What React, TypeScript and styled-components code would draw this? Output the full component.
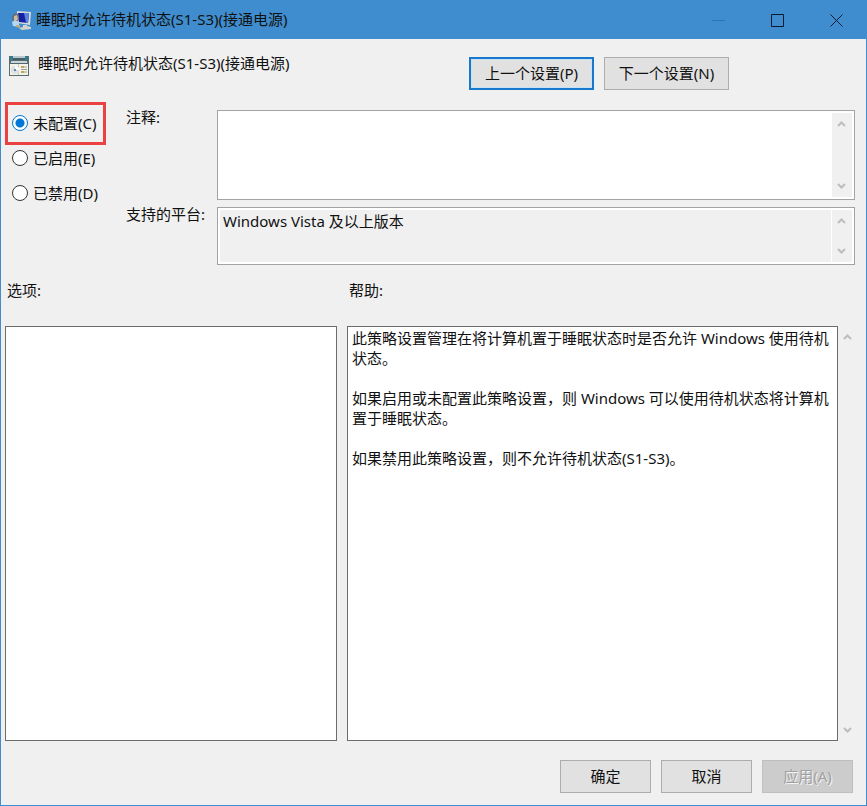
import React, { useState } from "react";
import styled, { createGlobalStyle, css } from "styled-components";

const GlobalStyle = createGlobalStyle`
  * { box-sizing: border-box; }
  body {
    margin: 0;
    background: #f0f0f0;
    color: #111;
    font: 15px/20px "Noto Sans", "Noto Sans CJK SC", sans-serif;
  }
  button, input, textarea { font: inherit; color: inherit; margin: 0; }
`;

const Window = styled.main`
  display: flex;
  flex-direction: column;
  min-height: 100vh;
  background: #f0f0f0;
  border: 1px solid #3f8dce;
`;

const TitleBar = styled.header`
  display: flex;
  align-items: center;
  height: 38px;
  padding-left: 10px;
  background: #3f8dce;
`;

const WindowTitle = styled.h1`
  flex: 1;
  margin: 0;
  padding: 0 0 2px 5px;
  font-size: 15px;
  font-weight: 400;
  white-space: nowrap;
`;

const CaptionGroup = styled.div`
  display: flex;
`;

const CaptionButton = styled.button`
  display: grid;
  place-items: center;
  width: 59px;
  height: 38px;
  padding: 0;
  border: 0;
  background: transparent;
  color: #0b1a30;
  &:disabled { color: #2b74b4; }
`;

const PolicyHeader = styled.section`
  display: flex;
  align-items: flex-start;
  gap: 9px;
  padding: 17px 137px 0 8px;
`;

const PolicyTitle = styled.h2`
  flex: 1;
  margin: 0;
  font-size: 15px;
  font-weight: 400;
  line-height: 14px;
  white-space: nowrap;
`;

const ButtonGroup = styled.div`
  display: flex;
  gap: 10px;
  padding-top: 1px;
`;

const Button = styled.button<{ $width: number; $focused?: boolean }>`
  width: ${(p) => p.$width}px;
  height: 33px;
  padding: 0 0 2px;
  border: 1px solid #adadad;
  background: #e1e1e1;
  white-space: nowrap;
  ${(p) =>
    p.$focused &&
    css`
      border: 2px solid #1878cc;
      box-shadow: inset 0 0 0 1px #c9e1f4;
    `}
  &:disabled {
    background: #cccccc;
    border-color: #bfbfbf;
    color: #a0a0a0;
    text-shadow: 1px 1px 0 #f4f4f4;
  }
`;

const Settings = styled.section`
  display: grid;
  grid-template-columns: 101px minmax(0, 1fr);
  column-gap: 20px;
  padding: 12px 11px 0 4px;
`;

const StateGroup = styled.fieldset`
  display: flex;
  flex-direction: column;
  min-width: 0;
  margin: 0;
  padding: 0;
  border: 0;
`;

const StateOption = styled.label<{ $marked?: boolean }>`
  display: flex;
  align-items: center;
  gap: 5px;
  height: 35px;
  padding: 0 0 1px 7px;
  white-space: nowrap;
  ${(p) =>
    p.$marked &&
    css`
      height: 43px;
      margin-bottom: -4px;
      padding-left: 4px;
      border: 3px solid #ea4243;
    `}
`;

const Radio = styled.input`
  appearance: none;
  flex: none;
  width: 16px;
  height: 16px;
  border: 1px solid #333;
  border-radius: 50%;
  background: #fff;
  &:checked {
    border-color: #0078d7;
    background: radial-gradient(circle, #0078d7 0 4px, #fff 5px);
  }
`;

const StateText = styled.span`
  padding-bottom: 1px;
`;

const Fields = styled.div`
  display: grid;
  grid-template-columns: 83px minmax(0, 1fr);
  column-gap: 8px;
  row-gap: 7px;
  padding-top: 8px;
`;

const FieldLabel = styled.label`
  line-height: 14px;
  white-space: nowrap;
`;

const Field = styled.div<{ $height: number }>`
  display: flex;
  height: ${(p) => p.$height}px;
  padding: 2px;
  border: 1px solid #a3a3a3;
  background: #fff;
`;

const TextArea = styled.textarea`
  flex: 1;
  min-width: 0;
  padding: 1px 4px;
  border: 0;
  outline: 0;
  resize: none;
  overflow: hidden;
  background: #fff;
`;

const PlatformText = styled(TextArea)`
  margin-right: 1px;
  padding-left: 3px;
  background: #f0f0f0;
`;

const HelpText = styled(TextArea)`
  border: 1px solid #6b6d6b;
`;

const ScrollTrack = styled.div`
  display: flex;
  flex-direction: column;
  justify-content: space-between;
  flex: none;
  width: 20px;
  background: #f0f0f0;
`;

const ScrollButton = styled.button`
  display: grid;
  place-items: center;
  width: 20px;
  height: 22px;
  padding: 0;
  border: 0;
  background: transparent;
  color: #bdbdbd;
`;

const Details = styled.section`
  display: grid;
  flex: 1;
  grid-template-columns: minmax(0, 332fr) minmax(0, 511fr);
  grid-template-rows: auto 1fr;
  column-gap: 10px;
  row-gap: 26px;
  padding: 15px 8px 0 4px;
`;

const DetailLabel = styled.label`
  padding-left: 2px;
`;

const DetailHeading = styled.h2`
  margin: 0;
  padding-left: 2px;
  font-size: 15px;
  font-weight: 400;
`;

const OptionsPanel = styled.div`
  border: 1px solid #6b6d6b;
  background: #fff;
`;

const HelpPanel = styled.div`
  display: flex;
`;

const Footer = styled.footer`
  display: flex;
  justify-content: flex-end;
  gap: 10px;
  padding: 19px 13px 12px;
`;

const Chevron = ({ up }: { up?: boolean }) => (
  <svg width="10" height="8" viewBox="0 0 10 8" fill="none" stroke="currentColor" strokeWidth="2">
    <path d={up ? "M1 6 4.5 2.5 8 6" : "M1 2 4.5 5.5 8 2"} />
  </svg>
);

const Scroller = ({ name }: { name: string }) => (
  <ScrollTrack>
    <ScrollButton type="button" aria-label={`${name}向上滚动`}><Chevron up /></ScrollButton>
    <ScrollButton type="button" aria-label={`${name}向下滚动`}><Chevron /></ScrollButton>
  </ScrollTrack>
);

const ComputerIcon = () => (
  <svg width="20" height="19" viewBox="0 0 20 19" aria-hidden="true">
    <path d="M6 0 20 1 19 14 6 12Z" fill="#d5dadd" />
    <path d="M7 2 18 2 17 12 8 11Z" fill="#1420a0" />
    <path d="M13 2h5l-1 10-2-.5Z" fill="#5b83e2" />
    <path d="M12 14h4v1l4 1v2l-9 1-3-2 4-1Z" fill="#d2d4ca" />
    <path d="M1 5 4 2 7 3 8 8 6 12 2 11Z" fill="#5e6e7c" />
    <path d="M3 5 6 4 7 8 5 10 3 9Z" fill="#d1ba9d" />
    <path d="M1 11 4 9 8 11 8 16 2 15Z" fill="#b9d6ef" />
    <path d="M5 14 9 14 9 17 5 16Z" fill="#b9ad84" />
  </svg>
);

const PolicyIcon = () => (
  <svg width="20" height="20" viewBox="0 0 20 20" aria-hidden="true">
    <path d="M0 0h20v20H0Z" fill="#596c70" />
    <path d="M1 0h3v4H1ZM16 0h3v4h-3Z" fill="#357a8d" />
    <path d="M4 0h12v2H4Z" fill="#bcc9cb" />
    <path d="M4 2h12v2H4Z" fill="#465e69" />
    <path d="M2 5h16v2H2Z" fill="#c9d6d8" />
    <path d="M2 7h16v1H2Z" fill="#526770" />
    <path d="M1 8h18v11H1Z" fill="#f3f3e7" />
    <path d="M9 8h1v11H9Z" fill="#c9cbc0" />
    <circle cx="6" cy="14" r="4" fill="#dbe0e4" />
    <path d="M6 14V10a4 4 0 0 1 4 4Z" fill="#fff" />
    <circle cx="6" cy="14" r="1" fill="#3c6488" />
    <path d="M12 10h3v2h-3ZM12 15h3v2h-3Z" fill="#c3a45c" />
    <path d="M15 11h3M12 13.5h6M15 16h3" stroke="#9ba29c" />
  </svg>
);

const states = ["未配置(C)", "已启用(E)", "已禁用(D)"];

const helpText = `此策略设置管理在将计算机置于睡眠状态时是否允许 Windows 使用待机状态。

如果启用或未配置此策略设置，则 Windows 可以使用待机状态将计算机置于睡眠状态。

如果禁用此策略设置，则不允许待机状态(S1-S3)。`;

export default function App() {
  const [state, setState] = useState(0);
  const [comment, setComment] = useState("");

  return (
    <>
      <GlobalStyle />
      <Window>
        <TitleBar>
          <ComputerIcon />
          <WindowTitle>睡眠时允许待机状态(S1-S3)(接通电源)</WindowTitle>
          <CaptionGroup>
            <CaptionButton type="button" aria-label="最小化" disabled>
              <svg width="13" height="13" fill="none" stroke="currentColor"><path d="M0 6.5h13" /></svg>
            </CaptionButton>
            <CaptionButton type="button" aria-label="最大化">
              <svg width="13" height="13" fill="none" stroke="currentColor"><path d="M.5.5h12v12H.5Z" /></svg>
            </CaptionButton>
            <CaptionButton type="button" aria-label="关闭">
              <svg width="13" height="13" fill="none" stroke="currentColor"><path d="m.5.5 12 12m0-12-12 12" /></svg>
            </CaptionButton>
          </CaptionGroup>
        </TitleBar>

        <PolicyHeader>
          <PolicyIcon />
          <PolicyTitle>睡眠时允许待机状态(S1-S3)(接通电源)</PolicyTitle>
          <ButtonGroup>
            <Button type="button" $width={125} $focused>上一个设置(P)</Button>
            <Button type="button" $width={125}>下一个设置(N)</Button>
          </ButtonGroup>
        </PolicyHeader>

        <Settings>
          <StateGroup aria-label="策略状态">
            {states.map((label, index) => (
              <StateOption key={label} $marked={index === 0}>
                <Radio
                  type="radio"
                  name="state"
                  checked={state === index}
                  onChange={() => setState(index)}
                />
                <StateText>{label}</StateText>
              </StateOption>
            ))}
          </StateGroup>
          <Fields>
            <FieldLabel htmlFor="comment">注释:</FieldLabel>
            <Field $height={90}>
              <TextArea id="comment" value={comment} onChange={(e) => setComment(e.target.value)} />
              <Scroller name="注释" />
            </Field>
            <FieldLabel htmlFor="platform">支持的平台:</FieldLabel>
            <Field $height={58}>
              <PlatformText id="platform" readOnly value="Windows Vista 及以上版本" />
              <Scroller name="支持的平台" />
            </Field>
          </Fields>
        </Settings>

        <Details>
          <DetailHeading id="options-heading">选项:</DetailHeading>
          <DetailLabel htmlFor="help">帮助:</DetailLabel>
          <OptionsPanel role="region" aria-labelledby="options-heading" />
          <HelpPanel>
            <HelpText id="help" readOnly value={helpText} />
            <Scroller name="帮助" />
          </HelpPanel>
        </Details>

        <Footer>
          <Button type="button" $width={91}>确定</Button>
          <Button type="button" $width={91}>取消</Button>
          <Button type="button" $width={91} disabled>应用(A)</Button>
        </Footer>
      </Window>
    </>
  );
}
